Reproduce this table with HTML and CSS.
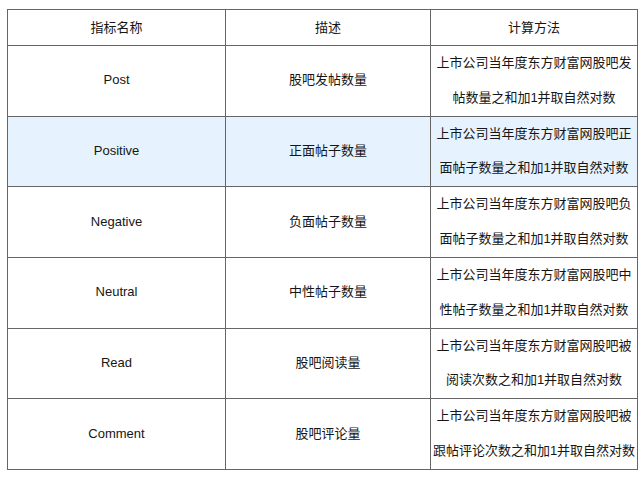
FILE: index.html
```html
<!DOCTYPE html>
<html lang="zh-CN">
<head>
<meta charset="utf-8">
<title>指标说明</title>
<link rel="stylesheet" href="styles.css">
</head>
<body>
<div class="wrap">
<table class="metrics">
  <colgroup>
    <col class="c1">
    <col class="c2">
    <col class="c3">
  </colgroup>
  <thead>
    <tr><th>指标名称</th><th>描述</th><th>计算方法</th></tr>
  </thead>
  <tbody>
    <tr><td>Post</td><td>股吧发帖数量</td><td>上市公司当年度东方财富网股吧发帖数量之和加1并取自然对数</td></tr>
    <tr class="hl"><td>Positive</td><td>正面帖子数量</td><td>上市公司当年度东方财富网股吧正面帖子数量之和加1并取自然对数</td></tr>
    <tr><td>Negative</td><td>负面帖子数量</td><td>上市公司当年度东方财富网股吧负面帖子数量之和加1并取自然对数</td></tr>
    <tr><td>Neutral</td><td>中性帖子数量</td><td>上市公司当年度东方财富网股吧中性帖子数量之和加1并取自然对数</td></tr>
    <tr><td>Read</td><td>股吧阅读量</td><td>上市公司当年度东方财富网股吧被阅读次数之和加1并取自然对数</td></tr>
    <tr><td>Comment</td><td>股吧评论量</td><td>上市公司当年度东方财富网股吧被跟帖评论次数之和加1并取自然对数</td></tr>
  </tbody>
</table>
</div>
</body>
</html>
```

FILE: styles.css
```css
html, body {
  margin: 0;
  padding: 0;
  background: #ffffff;
}
.wrap {
  padding: 9px 0 0 7px;
}
.metrics {
  border-collapse: collapse;
  table-layout: fixed;
  width: 630px;
  font-family: "Liberation Sans", Arial, "Noto Sans CJK SC", sans-serif;
  font-size: 13px;
  color: #161616;
}
.c1 { width: 218px; }
.c2 { width: 205px; }
.c3 { width: 207px; }
.metrics th,
.metrics td {
  border: 1px solid #666666;
  padding: 0 1px;
  text-align: center;
  vertical-align: middle;
  line-height: 35px;
  font-weight: normal;
}
.metrics tbody td {
  line-height: 34.83px;
}
.metrics tr.hl td {
  background: #e6f2fd;
}
```
